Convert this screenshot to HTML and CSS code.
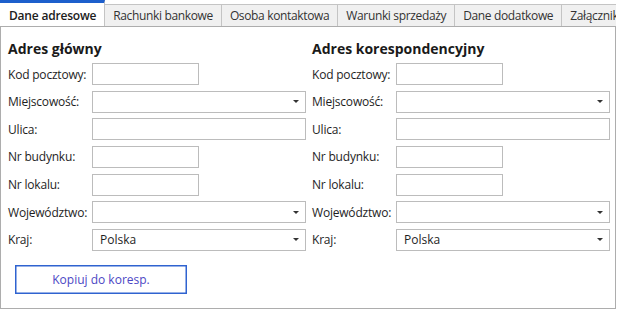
FILE: index.html
```html
<!DOCTYPE html>
<html lang="pl">
<head>
<meta charset="utf-8">
<link rel="stylesheet" href="styles.css">
</head>
<body>
<div class="window">
  <div class="tabs">
    <div class="tab active">Dane adresowe</div>
    <div class="tab">Rachunki bankowe</div>
    <div class="tab">Osoba kontaktowa</div>
    <div class="tab">Warunki sprzedaży</div>
    <div class="tab">Dane dodatkowe</div>
    <div class="tab">Załączniki</div>
  </div>
  <div class="panel">
    <div class="columns">
      <section class="col">
        <h2 class="title">Adres główny</h2>
        <div class="rows">
          <div class="row"><span class="label">Kod pocztowy:</span><div class="box short"></div></div>
          <div class="row"><span class="label">Miejscowość:</span><div class="box combo"><span class="value"></span><span class="arrow"></span></div></div>
          <div class="row"><span class="label">Ulica:</span><div class="box"></div></div>
          <div class="row"><span class="label">Nr budynku:</span><div class="box short"></div></div>
          <div class="row"><span class="label">Nr lokalu:</span><div class="box short"></div></div>
          <div class="row"><span class="label">Województwo:</span><div class="box combo"><span class="value"></span><span class="arrow"></span></div></div>
          <div class="row"><span class="label">Kraj:</span><div class="box combo"><span class="value">Polska</span><span class="arrow"></span></div></div>
        </div>
      </section>
      <section class="col">
        <h2 class="title">Adres korespondencyjny</h2>
        <div class="rows">
          <div class="row"><span class="label">Kod pocztowy:</span><div class="box short"></div></div>
          <div class="row"><span class="label">Miejscowość:</span><div class="box combo"><span class="value"></span><span class="arrow"></span></div></div>
          <div class="row"><span class="label">Ulica:</span><div class="box"></div></div>
          <div class="row"><span class="label">Nr budynku:</span><div class="box short"></div></div>
          <div class="row"><span class="label">Nr lokalu:</span><div class="box short"></div></div>
          <div class="row"><span class="label">Województwo:</span><div class="box combo"><span class="value"></span><span class="arrow"></span></div></div>
          <div class="row"><span class="label">Kraj:</span><div class="box combo"><span class="value">Polska</span><span class="arrow"></span></div></div>
        </div>
      </section>
    </div>
    <button class="copy-btn" type="button">Kopiuj do koresp.</button>
  </div>
</div>
</body>
</html>
```
FILE: styles.css
```css
* { box-sizing: border-box; }
html, body { margin: 0; padding: 0; background: #ffffff; }
body {
  font-family: "Open Sans", "Noto Sans", sans-serif;
  font-size: 12px;
  color: #1e1e1e;
  width: 617px;
  height: 311px;
  overflow: hidden;
}
.window { width: 616px; }
.tabs {
  display: flex;
  align-items: flex-end;
  height: 26px;
  white-space: nowrap;
  overflow: hidden;
  position: relative;
  z-index: 1;
}
.tab {
  flex: none;
  height: 22px;
  line-height: 21px;
  padding: 0 8px;
  background: #f0f0f0;
  border-top: 1px solid #c4c4c4;
  border-right: 1px solid #c4c4c4;
  color: #333;
  letter-spacing: -0.35px;
}
.tab.active {
  height: 27px;
  margin-bottom: -1px;
  background: #ffffff;
  border-top: 3px solid #1d5fcc;
  border-right: 1px solid #c4c4c4;
  padding-top: 2px;
  line-height: 21px;
  color: #202020;
  font-weight: 600;
  padding-left: 9px;
  letter-spacing: -0.2px;
}
.panel {
  height: 283px;
  border: 1px solid #adadad;
  padding: 12px 7px 0 7px;
}
.columns {
  display: grid;
  grid-template-columns: 298px 298px;
  column-gap: 6px;
}
.title {
  margin: 0 0 5px 0;
  font-size: 14px;
  line-height: 19px;
  font-weight: 700;
  color: #1a1a1a;
}
.rows {
  display: flex;
  flex-direction: column;
  gap: 5.67px;
}
.row {
  display: flex;
  align-items: center;
  height: 22px;
}
.label {
  width: 84px;
  flex: none;
  letter-spacing: -0.2px;
  color: #1e1e1e;
}
.box {
  width: 214px;
  height: 22px;
  border: 1px solid #bcbcbc;
  background: #fff;
}
.box.short { width: 107px; }
.combo {
  display: flex;
  align-items: center;
  justify-content: space-between;
  padding: 0 6px 0 7px;
}
.value { color: #1e1e1e; }
.arrow {
  width: 0;
  height: 0;
  border-left: 3px solid transparent;
  border-right: 3px solid transparent;
  border-top: 3px solid #333;
}
.copy-btn {
  display: block;
  margin: 14px 0 0 7px;
  width: 172px;
  height: 29px;
  background: #ffffff;
  border: 1px solid #2f63d0;
  box-shadow: inset 0 0 0 0.5px #2f63d0;
  color: #4b47c4;
  font-family: inherit;
  font-size: 12px;
  padding: 0;
  cursor: pointer;
}
```
